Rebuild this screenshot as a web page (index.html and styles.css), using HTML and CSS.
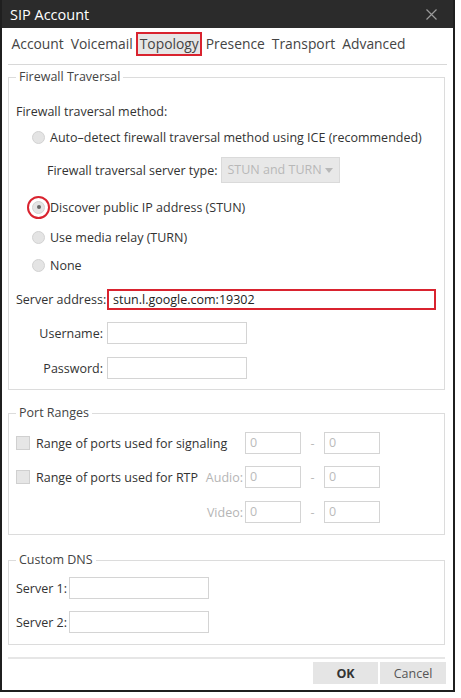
FILE: index.html
```html
<!DOCTYPE html>
<html lang="en">

<head>
    <meta charset="UTF-8">
    <meta name="viewport" content="width=device-width, initial-scale=1.0">
    <title>SIP Account</title>
    <link rel="stylesheet" href="styles.css">
</head>

<body>
    <div class="window">
        <div class="titlebar">
            <span class="title">SIP Account</span>
            <svg class="close" width="11" height="11" viewBox="0 0 11 11">
                <path d="M0.5 0.5 L10.5 10.5 M10.5 0.5 L0.5 10.5" stroke="#9a9a9a" stroke-width="1.2" fill="none" />
            </svg>
        </div>

        <div class="tabs">
            <span class="tab">Account</span>
            <span class="tab">Voicemail</span>
            <span class="tab active">Topology</span>
            <span class="tab">Presence</span>
            <span class="tab">Transport</span>
            <span class="tab">Advanced</span>
        </div>
        <div class="tabs-line"></div>

        <!-- Firewall traversal -->
        <fieldset class="group firewall">
            <legend>Firewall Traversal</legend>
            <div class="row method">Firewall traversal method:</div>
            <div class="row radio-row r-auto">
                <span class="radio"></span>
                <span>Auto–detect firewall traversal method using ICE (recommended)</span>
            </div>
            <div class="row r-type">
                <span class="type-label">Firewall traversal server type:</span>
                <div class="select">STUN and TURN<span class="caret"></span></div>
            </div>
            <div class="row radio-row r-discover">
                <span class="radio checked"><span class="ring"></span></span>
                <span>Discover public IP address (STUN)</span>
            </div>
            <div class="row radio-row r-media">
                <span class="radio"></span>
                <span>Use media relay (TURN)</span>
            </div>
            <div class="row radio-row r-none">
                <span class="radio"></span>
                <span>None</span>
            </div>
            <div class="row r-server">
                <span class="field-label">Server address:</span>
                <div class="input server-input">stun.l.google.com:19302</div>
            </div>
            <div class="row r-user">
                <span class="field-label right">Username:</span>
                <div class="input short"></div>
            </div>
            <div class="row r-pass">
                <span class="field-label right">Password:</span>
                <div class="input short"></div>
            </div>
        </fieldset>

        <!-- Port ranges -->
        <fieldset class="group ports">
            <legend>Port Ranges</legend>
            <div class="row port-row p-signal">
                <div class="port-left">
                    <span class="check-wrap"><span class="checkbox"></span>Range of ports used for signaling</span>
                </div>
                <div class="input port">0</div>
                <span class="dash">-</span>
                <div class="input port">0</div>
            </div>
            <div class="row port-row p-rtp">
                <div class="port-left">
                    <span class="check-wrap"><span class="checkbox"></span>Range of ports used for RTP</span>
                    <span class="sub-label">Audio:</span>
                </div>
                <div class="input port">0</div>
                <span class="dash">-</span>
                <div class="input port">0</div>
            </div>
            <div class="row port-row p-video">
                <div class="port-left">
                    <span></span>
                    <span class="sub-label">Video:</span>
                </div>
                <div class="input port">0</div>
                <span class="dash">-</span>
                <div class="input port">0</div>
            </div>
        </fieldset>

        <!-- Custom DNS -->
        <fieldset class="group dns">
            <legend>Custom DNS</legend>
            <div class="row d-one">
                <span class="dns-label">Server 1:</span>
                <div class="input dns-input"></div>
            </div>
            <div class="row d-two">
                <span class="dns-label">Server 2:</span>
                <div class="input dns-input"></div>
            </div>
        </fieldset>

        <div class="separator"></div>

        <div class="buttons">
            <button class="btn ok">OK</button>
            <button class="btn">Cancel</button>
        </div>
    </div>
</body>

</html>
```

FILE: styles.css
```css
body {
    margin: 0;
    padding: 0;
    background-color: #fff;
    font-family: "Open Sans", "Noto Sans", sans-serif;
    color: #333;
}

.window {
    width: 451px;
    height: 690px;
    border: 2px solid #1f1f1f;
    border-top: 0;
    display: flex;
    flex-direction: column;
    background-color: #fff;
}

.titlebar {
    height: 28px;
    background-color: #2b2b2b;
    display: flex;
    align-items: center;
    justify-content: space-between;
    padding: 0 16px 0 8px;
    color: #fff;
    font-size: 14.5px;
}

.close {
    display: block;
}

.tabs {
    display: flex;
    padding: 4px 0 0 6px;
    font-size: 13.85px;
    color: #444;
}

.tab {
    height: 20px;
    line-height: 20px;
    padding: 0 1.5px;
    border: 2px solid transparent;
}

.tab.active {
    background-color: #e6e6e6;
    border-color: #d9232f;
}

.tabs-line {
    height: 1px;
    margin: 8px 6px 0 6px;
    background-color: #d8d8d8;
}

.group {
    margin: 0 8px 0 6px;
    padding: 0 8px 0 7px;
    border: 1px solid #dcdcdc;
    min-width: 0;
}

.group legend {
    padding: 0 3px;
    font-size: 12.5px;
    line-height: 16px;
    color: #444;
}

.row {
    display: flex;
    align-items: center;
    height: 24px;
    font-size: 12.5px;
    white-space: nowrap;
}

/* firewall traversal */
.firewall {
    margin-top: 4px;
    padding-bottom: 9px;
}

.method {
    margin-top: 14px;
}

.r-auto {
    margin-top: 2px;
}

.r-type {
    margin-top: 8px;
    height: 26px;
}

.r-discover {
    margin-top: 12px;
}

.r-media {
    margin-top: 6px;
}

.r-none {
    margin-top: 4px;
}

.r-server {
    margin-top: 10px;
}

.r-user {
    margin-top: 10px;
}

.r-pass {
    margin-top: 11px;
}

.radio-row {
    padding-left: 16px;
}

.radio {
    position: relative;
    width: 13px;
    height: 13px;
    margin-right: 5px;
    border-radius: 50%;
    border: 1px solid #d2d2d2;
    background-color: #e4e4e4;
    box-sizing: border-box;
    flex: none;
}

.radio.checked::after {
    content: "";
    position: absolute;
    left: 3.5px;
    top: 3.5px;
    width: 4px;
    height: 4px;
    border-radius: 50%;
    background-color: #666;
}

.ring {
    position: absolute;
    left: -6px;
    top: -6px;
    width: 23px;
    height: 23px;
    border: 2px solid #d9232f;
    border-radius: 50%;
    box-sizing: border-box;
}

.type-label {
    margin-left: 31px;
    margin-right: 4px;
}

.select {
    position: relative;
    width: 119px;
    height: 26px;
    box-sizing: border-box;
    padding-left: 5px;
    line-height: 24px;
    border: 1px solid #dadada;
    background-color: #e8e8e8;
    color: #b8b8b8;
}

.caret {
    position: absolute;
    right: 6px;
    top: 10px;
    border-left: 4px solid transparent;
    border-right: 4px solid transparent;
    border-top: 5px solid #b8b8b8;
}

.field-label {
    width: 87px;
    margin-right: 4px;
    flex: none;
}

.field-label.right {
    text-align: right;
}

.input {
    height: 22px;
    line-height: 20px;
    box-sizing: border-box;
    border: 1px solid #d4d4d4;
    background-color: #fff;
    padding-left: 4px;
}

.server-input {
    width: 329px;
    height: 21px;
    line-height: 17px;
    border: 2px solid #d9232f;
    color: #222;
}

.short {
    width: 140px;
}

/* port ranges */
.ports {
    margin-top: 15px;
    padding-bottom: 11px;
}

.port-row {
    height: 22px;
}

.p-signal {
    margin-top: 11px;
}

.p-rtp {
    margin-top: 12px;
}

.p-video {
    margin-top: 13px;
}

.port-left {
    width: 227px;
    margin-right: 2px;
    display: flex;
    justify-content: space-between;
    align-items: center;
    flex: none;
}

.check-wrap {
    display: flex;
    align-items: center;
}

.checkbox {
    width: 14px;
    height: 14px;
    margin-right: 6px;
    box-sizing: border-box;
    border: 1px solid #d0d0d0;
    background-color: #e6e6e6;
}

.sub-label {
    color: #b5b5b5;
}

.port {
    width: 56px;
    color: #bbb;
}

.dash {
    width: 23px;
    text-align: center;
    color: #bbb;
}

/* custom dns */
.dns {
    margin-top: 17px;
    padding-bottom: 11px;
}

.d-one {
    margin-top: 9px;
    height: 22px;
}

.d-two {
    margin-top: 12px;
    height: 22px;
}

.dns-label {
    width: 53px;
    flex: none;
}

.dns-input {
    width: 140px;
}

.separator {
    height: 2px;
    margin: 12px 8px 0 6px;
    background-color: #e6e6e6;
}

.buttons {
    display: flex;
    justify-content: flex-end;
    gap: 2px;
    margin-top: 3px;
    padding-right: 7px;
}

.btn {
    width: 66px;
    height: 22px;
    border: none;
    background-color: #e5e5e5;
    font-family: inherit;
    font-size: 12.5px;
    color: #555;
    padding: 0;
}

.btn.ok {
    width: 65px;
    font-weight: bold;
    color: #333;
}
```
